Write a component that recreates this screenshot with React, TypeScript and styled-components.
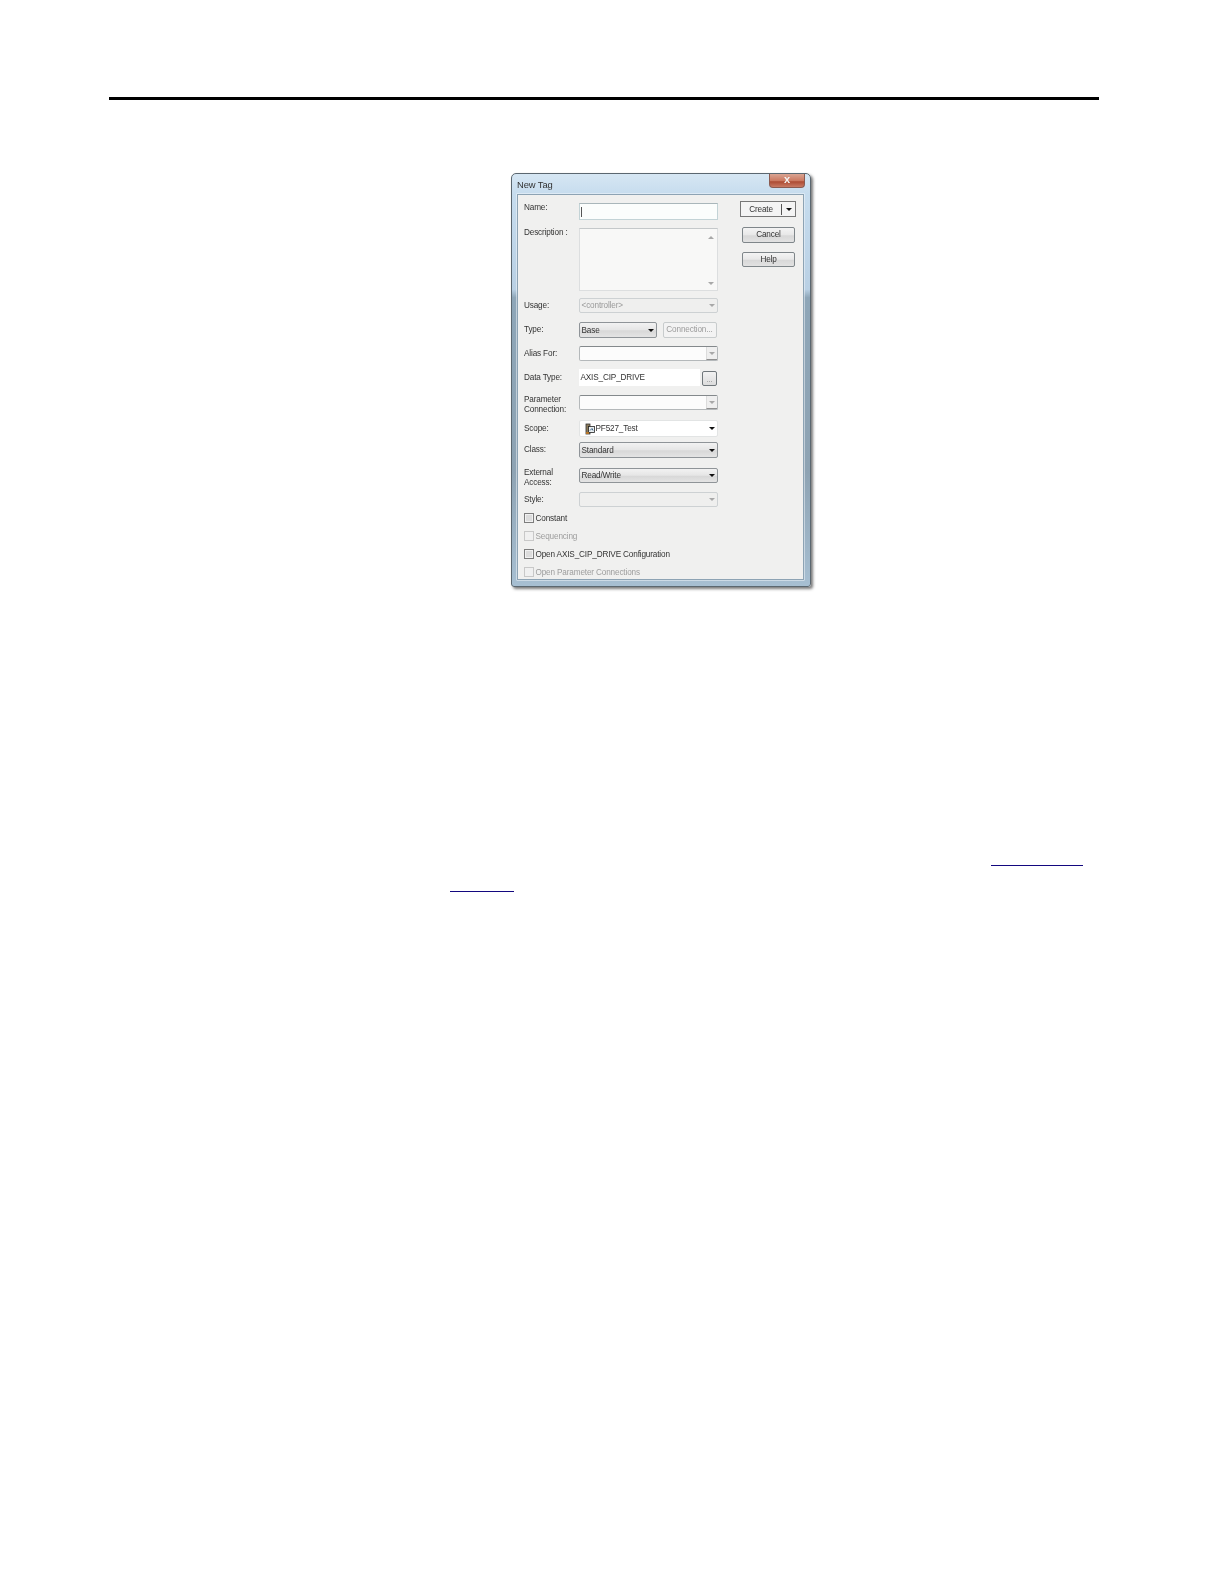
import React from "react";
import styled, { createGlobalStyle } from "styled-components";

const Global = createGlobalStyle`
  html, body { margin: 0; padding: 0; background: #fff; }
  body { font-family: "Liberation Sans", Arial, sans-serif; }
`;

const Page = styled.div`
  width: 1224px;
  height: 1584px;
  background: #fff;
  overflow: hidden;
  padding-top: 97px;
  box-sizing: border-box;
`;

const HeaderRule = styled.div`
  width: 990px;
  height: 3px;
  margin-left: 109px;
  background: #000;
`;

const Dialog = styled.div`
  width: 300px;
  height: 414px;
  margin: 73px 0 0 511px;
  box-sizing: border-box;
  padding: 0 6px 6px 5px;
  display: flex;
  flex-direction: column;
  border: 1px solid #5b6770;
  border-radius: 5px 5px 3px 3px;
  background: linear-gradient(180deg, #d6e6f3 0%, #c6dcee 5%, #b9d0e4 28%, #8ea6b8 30%, #8ea3b3 72%, #a7bfd2 100%);
  box-shadow: 2px 2px 3px #7a7a7a;
  color: #333;
  font-size: 8.2px;
  letter-spacing: -0.15px;
  filter: blur(0.45px);
`;

const TitleBar = styled.div`
  height: 20px;
  flex: none;
  display: flex;
  align-items: flex-start;
  justify-content: space-between;
`;

const Title = styled.div`
  font-size: 9.4px;
  letter-spacing: -0.1px;
  color: #333;
  padding-top: 5px;
`;

const CloseButton = styled.div`
  width: 36px;
  height: 14px;
  margin-right: -1px;
  border: 1px solid #8a5a50;
  border-top: none;
  border-radius: 0 0 4px 4px;
  box-sizing: border-box;
  background: linear-gradient(180deg, #d9a493 0%, #cc7a62 50%, #ad4c34 60%, #c97a64 100%);
  color: #f4f4f4;
  font-size: 11px;
  font-weight: bold;
  line-height: 11px;
  text-align: center;
`;

const Body = styled.div`
  flex: 1;
  min-height: 0;
  display: flex;
  justify-content: space-between;
  background: #f0f0ef;
  border: 1px solid #8da3b4;
  box-shadow: 0 0 0 0.5px #f4f8fb;
  box-sizing: border-box;
  padding: 0 7px 0 6px;
`;

const Form = styled.div`
  width: 194px;
  display: flex;
  flex-direction: column;
`;

const Row = styled.div<{ $top: number; $h: number; $align?: string }>`
  display: flex;
  flex: none;
  align-items: ${(p) => p.$align ?? "center"};
  height: ${(p) => p.$h}px;
  margin-top: ${(p) => p.$top}px;
`;

const Label = styled.div`
  width: 54.5px;
  flex: none;
  line-height: 10px;
  color: #333;
`;

const Input = styled.div<{ $w?: number; $plain?: boolean }>`
  width: ${(p) => p.$w ?? 139.5}px;
  height: 100%;
  box-sizing: border-box;
  background: ${(p) => (p.$plain ? "#fff" : "#fbfdfc")};
  border: 1px solid ${(p) => (p.$plain ? "#fff" : "#c3d3d6")};
  border-top-color: ${(p) => (p.$plain ? "#fff" : "#a9b6ba")};
  display: flex;
  align-items: center;
  padding-left: 1px;
  color: #333;
`;

const Caret = styled.div`
  width: 1px;
  height: 10px;
  background: #555;
`;

const Memo = styled.div`
  width: 139.5px;
  height: 100%;
  box-sizing: border-box;
  background: #f8f8f7;
  border: 1px solid #dcdedf;
  border-top-color: #c4c8ca;
  display: flex;
  justify-content: flex-end;
`;

const ScrollTrack = styled.div`
  width: 12px;
  display: flex;
  flex-direction: column;
  justify-content: space-between;
  align-items: center;
  padding: 7px 0 5px;
  box-sizing: border-box;
`;

const Tri = styled.div<{ $up?: boolean; $dark?: boolean }>`
  width: 0;
  height: 0;
  flex: none;
  border-left: 3px solid transparent;
  border-right: 3px solid transparent;
  ${(p) => (p.$up ? "border-bottom" : "border-top")}: 3px solid ${(p) => (p.$dark ? "#111" : "#a8a8a8")};
`;

type SelectState = "disabled" | "gradient" | "white" | "combo";

const selectBorder: Record<SelectState, string> = {
  disabled: "#cdd1d3",
  white: "#e2e4e4",
  combo: "#b4b8ba",
  gradient: "#8f9498",
};

const selectFill: Record<SelectState, string> = {
  disabled: "#efefee",
  white: "#ffffff",
  combo: "#fcfcfc",
  gradient: "linear-gradient(180deg, #f2f2f2 0%, #e6e6e6 48%, #d8d8d8 56%, #e4e4e4 100%)",
};

const Select = styled.div<{ $w?: number; $h?: number; $state: SelectState }>`
  width: ${(p) => p.$w ?? 139.5}px;
  height: ${(p) => (p.$h ? `${p.$h}px` : "100%")};
  box-sizing: border-box;
  display: flex;
  align-items: center;
  justify-content: space-between;
  padding: 0 2px 0 2px;
  border-radius: 2px;
  border: 1px solid ${(p) => selectBorder[p.$state]};
  border-top-color: ${(p) => (p.$state === "combo" ? "#84898c" : selectBorder[p.$state])};
  background: ${(p) => selectFill[p.$state]};
  color: ${(p) => (p.$state === "disabled" ? "#9a9a9a" : "#333")};
`;

const ComboArrow = styled.div`
  width: 11px;
  height: 100%;
  margin-right: -2px;
  background: #efefef;
  border-left: 1px solid #dcdcdc;
  border-bottom: 1px solid #8f8f8f;
  display: flex;
  align-items: center;
  justify-content: center;
  box-sizing: border-box;
`;

const ScopeValue = styled.div`
  display: flex;
  align-items: center;
  gap: 1px;
  margin-left: 3px;
`;

const GhostButton = styled.div`
  width: 54px;
  height: 100%;
  margin-left: 6px;
  box-sizing: border-box;
  border: 1px solid #c8cccd;
  border-radius: 2px;
  background: #f3f3f3;
  color: #9c9c9c;
  text-align: center;
  line-height: 13px;
`;

const DotsButton = styled.div`
  width: 15px;
  height: 15px;
  margin-left: 2px;
  align-self: flex-end;
  box-sizing: border-box;
  border: 1px solid #70777b;
  border-radius: 2px;
  background: linear-gradient(180deg, #f2f2f2, #dcdcdc);
  color: #777;
  text-align: center;
  line-height: 15px;
  font-size: 7px;
`;

const CheckRow = styled.div<{ $top: number; $off?: boolean }>`
  display: flex;
  flex: none;
  align-items: center;
  gap: 1.5px;
  height: 10px;
  margin-top: ${(p) => p.$top}px;
  color: ${(p) => (p.$off ? "#9d9d9d" : "#333")};
  white-space: nowrap;
`;

const Box = styled.div<{ $off?: boolean }>`
  width: 10px;
  height: 10px;
  box-sizing: border-box;
  border: 1px solid ${(p) => (p.$off ? "#c8c8c8" : "#7d7d7d")};
  background: ${(p) => (p.$off ? "#f0f0f0" : "#dcdcdc")};
  box-shadow: ${(p) => (p.$off ? "none" : "inset 0 0 0 1px #f1f1f1")};
`;

const Actions = styled.div`
  width: 56px;
  display: flex;
  flex-direction: column;
  padding-top: 6px;
`;

const SplitButton = styled.div`
  width: 56px;
  height: 16px;
  box-sizing: border-box;
  border: 1px solid #777;
  background: #f4f4f4;
  display: flex;
  align-items: center;
`;

const SplitLabel = styled.div`
  flex: 1;
  text-align: center;
  color: #333;
  border-right: 1px solid #555;
  height: 11px;
  line-height: 11px;
`;

const SplitArrow = styled.div`
  width: 13px;
  display: flex;
  justify-content: center;
`;

const ActionButton = styled.div<{ $top: number; $h: number }>`
  width: 53px;
  height: ${(p) => p.$h}px;
  margin: ${(p) => p.$top}px 0 0 2px;
  box-sizing: border-box;
  border: 1px solid #7f868a;
  border-radius: 2px;
  background: linear-gradient(180deg, #f4f4f4 0%, #e8e8e8 48%, #d8d8d8 56%, #e2e2e2 100%);
  color: #333;
  text-align: center;
  line-height: ${(p) => p.$h - 2}px;
`;

const LinkLine = styled.div<{ $left: number; $top: number; $w: number }>`
  width: ${(p) => p.$w}px;
  height: 1px;
  margin-left: ${(p) => p.$left}px;
  margin-top: ${(p) => p.$top}px;
  background: #13087f;
`;

function TagIcon() {
  return (
    <svg width="10" height="12" viewBox="0 0 10 12">
      <rect x="1" y="1" width="4" height="10" fill="#8a7a5a" stroke="#333" strokeWidth="0.8" />
      <rect x="3.5" y="3.5" width="6" height="6" fill="#e9eef0" stroke="#222" strokeWidth="0.8" />
      <path d="M5 7.5l2-2 1 2" fill="none" stroke="#26527a" strokeWidth="0.9" />
      <rect x="1" y="9" width="3" height="2" fill="#b5752a" />
    </svg>
  );
}

export default function App() {
  return (
    <>
      <Global />
      <Page>
        <HeaderRule />
        <Dialog>
          <TitleBar>
            <Title>New Tag</Title>
            <CloseButton>x</CloseButton>
          </TitleBar>
          <Body>
            <Form>
              <Row $top={8} $h={17} $align="flex-start">
                <Label>Name:</Label>
                <Input>
                  <Caret />
                </Input>
              </Row>
              <Row $top={8} $h={63} $align="flex-start">
                <Label>Description :</Label>
                <Memo>
                  <ScrollTrack>
                    <Tri $up />
                    <Tri />
                  </ScrollTrack>
                </Memo>
              </Row>
              <Row $top={7} $h={15}>
                <Label>Usage:</Label>
                <Select $state="disabled">
                  &lt;controller&gt;
                  <Tri />
                </Select>
              </Row>
              <Row $top={9} $h={16}>
                <Label>Type:</Label>
                <Select $w={78} $state="gradient">
                  Base
                  <Tri $dark />
                </Select>
                <GhostButton>Connection...</GhostButton>
              </Row>
              <Row $top={8} $h={15}>
                <Label>Alias For:</Label>
                <Select $state="combo">
                  <span />
                  <ComboArrow>
                    <Tri />
                  </ComboArrow>
                </Select>
              </Row>
              <Row $top={8} $h={17}>
                <Label>Data Type:</Label>
                <Input $w={121.5} $plain>
                  AXIS_CIP_DRIVE
                </Input>
                <DotsButton>...</DotsButton>
              </Row>
              <Row $top={9} $h={20} $align="flex-start">
                <Label>
                  Parameter
                  <br />
                  Connection:
                </Label>
                <Select $state="combo" $h={15}>
                  <span />
                  <ComboArrow>
                    <Tri />
                  </ComboArrow>
                </Select>
              </Row>
              <Row $top={5} $h={17}>
                <Label>Scope:</Label>
                <Select $state="white">
                  <ScopeValue>
                    <TagIcon />
                    PF527_Test
                  </ScopeValue>
                  <Tri $dark />
                </Select>
              </Row>
              <Row $top={5} $h={16}>
                <Label>Class:</Label>
                <Select $state="gradient">
                  Standard
                  <Tri $dark />
                </Select>
              </Row>
              <Row $top={10} $h={20} $align="flex-start">
                <Label>
                  External
                  <br />
                  Access:
                </Label>
                <Select $state="gradient" $h={15}>
                  Read/Write
                  <Tri $dark />
                </Select>
              </Row>
              <Row $top={4} $h={15}>
                <Label>Style:</Label>
                <Select $state="disabled">
                  <span />
                  <Tri />
                </Select>
              </Row>
              <CheckRow $top={6}>
                <Box />
                Constant
              </CheckRow>
              <CheckRow $top={8} $off>
                <Box $off />
                Sequencing
              </CheckRow>
              <CheckRow $top={8}>
                <Box />
                Open AXIS_CIP_DRIVE Configuration
              </CheckRow>
              <CheckRow $top={8} $off>
                <Box $off />
                Open Parameter Connections
              </CheckRow>
            </Form>
            <Actions>
              <SplitButton>
                <SplitLabel>Create</SplitLabel>
                <SplitArrow>
                  <Tri $dark />
                </SplitArrow>
              </SplitButton>
              <ActionButton $top={10} $h={16}>Cancel</ActionButton>
              <ActionButton $top={9} $h={15}>Help</ActionButton>
            </Actions>
          </Body>
        </Dialog>
        <LinkLine $left={991} $top={278} $w={92} />
        <LinkLine $left={450} $top={25} $w={64} />
      </Page>
    </>
  );
}
